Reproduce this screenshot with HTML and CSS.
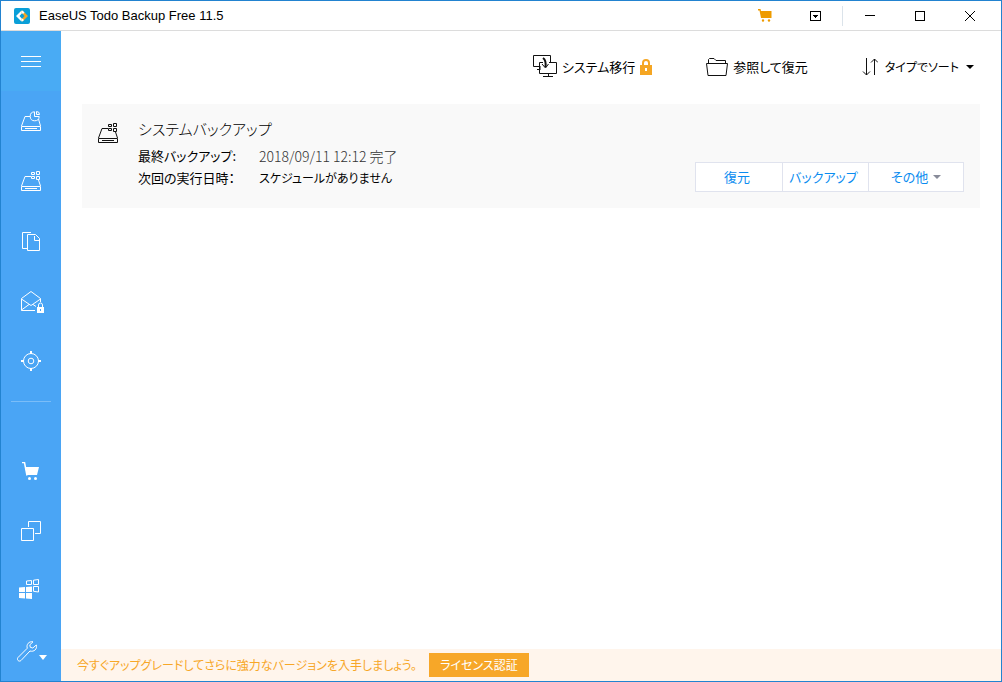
FILE: index.html
```html
<!DOCTYPE html>
<html lang="ja">
<head>
  <meta charset="UTF-8">
  <meta name="viewport" content="width=device-width, initial-scale=1.0">
  <title>EaseUS Todo Backup Free 11.5</title>
  <link rel="stylesheet" href="styles.css">
</head>
<body>
  <div class="window">
    <header class="titlebar">
      <svg class="logo" width="16" height="16" viewBox="0 0 16 16">
        <rect width="16" height="16" rx="2" fill="#0a9fd8"/>
        <path d="M7.500 2.500L2 8l5.500 5.500L9 12 5.500 8 9 4z" fill="#fff"/>
        <path d="M8.500 2.500L14 8l-5.500 5.500L7 12l3.500-4L7 4z" fill="#f5a623"/>
        <path d="M8.500 2.500L7 4l2 2 1.500-1.500zM7 12l1.500 1.500L10 12 8.500 10.500z" fill="#fff"/>
      </svg>
      <h1>EaseUS Todo Backup Free 11.5</h1>
      <div class="title-buttons">
        <button type="button" aria-label="購入">
          <svg width="14" height="14" viewBox="0 0 14 14" fill="#ee9b00">
            <path d="M0 0h2.500l.5 2H13.500v7H3L1.500 1.500H0z"/>
            <circle cx="5" cy="11.500" r="1.200"/><circle cx="11" cy="11.500" r="1.200"/>
          </svg>
        </button>
        <button type="button" aria-label="メニュー">
          <svg width="11" height="10" viewBox="0 0 11 10" shape-rendering="crispEdges">
            <rect x=".5" y=".5" width="10" height="9" fill="none" stroke="#000"/>
            <path d="M3 4h5v1H7v1H6v1H5V6H4V5H3z"/>
          </svg>
        </button>
        <span class="separator"></span>
        <button type="button" aria-label="最小化">
          <svg width="10" height="11" viewBox="0 0 10 11"><path d="M0 5h10v1H0z"/></svg>
        </button>
        <button type="button" aria-label="最大化">
          <svg width="10" height="10" viewBox="0 0 10 10"><rect x=".5" y=".5" width="9" height="9" fill="none" stroke="#000"/></svg>
        </button>
        <button type="button" aria-label="閉じる">
          <svg width="10" height="10" viewBox="0 0 10 10"><path d="M0 0l10 10M10 0L0 10" stroke="#000"/></svg>
        </button>
      </div>
    </header>

    <div class="body">
      <nav class="sidebar">
        <button type="button" class="menu" aria-label="メニューを開く">
          <svg width="20" height="11" viewBox="0 0 20 11"><path d="M0 .5h20M0 5.500h20M0 10.500h20"/></svg>
        </button>
        <button type="button" aria-label="ディスクバックアップ">
          <svg width="20" height="20" viewBox="0 0 20 20">
            <path d="M9 5.500H4L.5 15M17.500 8L19.500 15M.5 15.500h19v4H.5zM4 17.500h12"/>
            <path d="M13.500.8a4.500 4.500 0 1 0 4.700 4.700h-4.700zM15.500.5v3H18.500A3 3 0 0 0 15.500.5z"/>
          </svg>
        </button>
        <button type="button" aria-label="システムバックアップ">
          <svg width="20" height="20" viewBox="0 0 20 20">
            <path d="M10 5.500H4L.5 15M17.500 9l2 6M.5 15.500h19v4H.5zM4 17.500h12"/>
            <path d="M10.500 1.500h3v2h-3zM15.500.5h3v3h-3zM10.500 5.500h3v2h-3zM15.500 5.500h3v3h-3z"/>
          </svg>
        </button>
        <button type="button" aria-label="ファイルバックアップ">
          <svg width="18" height="19" viewBox="0 0 18 19">
            <path d="M5 16.500H.5V.5H9M5.500 2.500h8l4 4v12h-12zM12.500 4v4.500h5"/>
          </svg>
        </button>
        <button type="button" aria-label="メールバックアップ">
          <svg class="mail" width="23" height="22" viewBox="0 0 23 22">
            <path d="M14 19.500H.5V7.500L10 .5l9.500 7V11M.5 8L10 14.500 19.500 8M.5 19L8 13.500M12 13.500l3 2"/>
            <path d="M17.500 16v-2a2 2 0 0 1 4 0v2"/>
            <path class="solid" d="M16 16h7v6h-7z"/><path d="M19.500 18v2" stroke="#4aa5f5"/>
          </svg>
        </button>
        <button type="button" aria-label="スマートバックアップ">
          <svg width="20" height="20" viewBox="0 0 20 20">
            <circle cx="10" cy="10" r="7.500"/><circle cx="10" cy="10" r="2.800"/>
            <path d="M10 0v3M10 17v3M0 10h3M17 10h3" stroke-width="2"/>
          </svg>
        </button>
        <hr>
        <div class="sidebar-bottom">
          <button type="button" aria-label="購入">
            <svg width="18" height="18" viewBox="0 0 18 18">
              <path d="M0 .5h2.500L5 13.500" stroke-width="1.500"/>
              <path class="solid" d="M3 5h14l-2 8H5z"/>
              <circle class="solid" cx="7.500" cy="16.500" r="1.500"/><circle class="solid" cx="13.500" cy="16.500" r="1.500"/>
            </svg>
          </button>
          <button type="button" aria-label="クローン">
            <svg width="20" height="20" viewBox="0 0 20 20"><path d="M7.500 6V.5h12v12H14M.5 7.500h12v12H.5z"/></svg>
          </button>
          <button type="button" class="shift" aria-label="システムクローン">
            <svg width="20" height="20" viewBox="0 0 20 20">
              <path d="M7.500 2l5-.5v4h-5zM14.500 1.200l5-.7v5h-5zM14.500 7.500h5V13l-5-.7z"/>
              <path class="solid" d="M0 8.500L6 8v5H0zM7 8l6-.5V13H7zM0 14h6v5.500L0 19zM7 14h6v6l-6-.5z"/>
            </svg>
          </button>
          <button type="button" class="tools" aria-label="ツール">
            <svg width="30" height="21" viewBox="0 0 30 21">
              <path d="M16 .8C12 0 9 3.500 10.300 7.200L1 16.500c-1.800 2.200 1 4.800 3 3l9-9.500c4 1.200 7.500-2 6.300-6l-3.500 3-2.500-.7-.5-2.500z"/>
              <path class="solid" d="M22 14h8l-4 5z"/>
            </svg>
          </button>
        </div>
      </nav>

      <main>
        <div class="toolbar">
          <button type="button" class="migrate">
            <svg width="24" height="23" viewBox="0 0 24 23">
              <path d="M6 11.500H.5V.5h17V7M4 14.500h3M7 11v4M10 7.500H6.500v11h17v-11H16M15.500 19v2.500M10 21.500h10"/>
              <path d="M10 3c3 2 3 5 2.500 9" stroke-width="2"/><path d="M9 9l3.500 4L15.500 9"/>
            </svg>
            <span>システム移行</span>
            <svg width="12" height="16" viewBox="0 0 12 16">
              <path d="M3 7V4a3 3 0 0 1 6 0v3" stroke="#f5a623" stroke-width="2"/>
              <path d="M0 6h12v10H0z" fill="#f5a623" stroke="none"/><path d="M5 9h2v3H5z" fill="#fff" stroke="none"/>
            </svg>
          </button>
          <button type="button" class="browse">
            <svg width="22" height="18" viewBox="0 0 22 18">
              <path d="M2.500 5V1.500l1-1H8L10 2.500h9.500V5M.5 5.500h21L20 17.500H2z"/>
            </svg>
            <span>参照して復元</span>
          </button>
          <button type="button" class="sort">
            <svg width="16" height="18" viewBox="0 0 16 18">
              <path d="M4.500 0v17M1 13.500L4.500 17 8 13.500M12.500 17V1M9 4.500L12.500 1 16 4.500"/>
            </svg>
            <span>タイプでソート</span>
            <i class="caret"></i>
          </button>
        </div>

        <section class="card">
          <svg class="drive" width="20" height="20" viewBox="0 0 20 20">
            <path d="M10 5.500H4L.5 15M17.500 9l2 6M.5 15.500h19v4H.5zM4 17.500h12"/>
            <path d="M10.500 1.500h3v2h-3zM15.500.5h3v3h-3zM10.500 5.500h3v2h-3zM15.500 5.500h3v3h-3z"/>
          </svg>
          <div class="info">
            <h2>システムバックアップ</h2>
            <dl>
              <dt>最終バックアップ:</dt>
              <dd class="date">2018/09/11 12:12 完了</dd>
              <dt>次回の実行日時：</dt>
              <dd>スケジュールがありません</dd>
            </dl>
          </div>
          <div class="actions">
            <button type="button">復元</button>
            <button type="button">バックアップ</button>
            <button type="button" class="more">その他 <i class="caret"></i></button>
          </div>
        </section>

        <footer class="upgrade">
          <p>今すぐアップグレードしてさらに強力なバージョンを入手しましょう。</p>
          <button type="button">ライセンス認証</button>
        </footer>
      </main>
    </div>
  </div>
</body>
</html>
```
FILE: styles.css
```css
* {
  margin: 0;
  padding: 0;
  box-sizing: border-box;
}

body {
  font-family: "Noto Sans CJK JP", sans-serif;
  font-size: 13px;
  line-height: 22px;
  font-feature-settings: "palt";
  color: #000;
  background: #fff;
}

button {
  display: flex;
  align-items: center;
  justify-content: center;
  border: none;
  background: none;
  color: inherit;
  font: inherit;
  font-feature-settings: inherit;
  white-space: nowrap;
  cursor: pointer;
}

svg {
  flex: none;
}

.window {
  display: flex;
  flex-direction: column;
  min-height: 100vh;
  border: 1px solid #2283d0;
}

/* ===== Title bar ===== */
.titlebar {
  display: flex;
  align-items: center;
  height: 30px;
  padding-left: 13px;
  border-bottom: 1px solid #dcdcdc;
}

.titlebar h1 {
  margin-left: 9px;
  font: 13px "Liberation Sans", Arial, sans-serif;
}

.title-buttons {
  display: flex;
  align-items: center;
  margin-left: auto;
  padding-right: 6px;
}

.title-buttons button {
  width: 50px;
  height: 28px;
}

.separator {
  width: 1px;
  height: 20px;
  margin: 0 2px;
  background: #dbe3ea;
}

/* ===== Sidebar ===== */
.body {
  display: flex;
  flex: 1;
}

.sidebar {
  display: flex;
  flex-direction: column;
  width: 60px;
  background: #4aa5f5;
}

.sidebar button {
  width: 60px;
  height: 60px;
}

.sidebar .menu {
  background: #49abf4;
}

.sidebar svg {
  fill: none;
  stroke: #fff;
}

.sidebar .solid {
  fill: #fff;
  stroke: none;
}

.sidebar .mail {
  margin: 2px 0 0 3px;
}

.sidebar .shift {
  padding: 0 4px 4px 0;
}

.sidebar .tools {
  padding-left: 2px;
}

.sidebar hr {
  width: 40px;
  margin: 10px auto 0;
  border: none;
  border-top: 1px solid #7abdf8;
}

.sidebar-bottom {
  margin-top: auto;
}

/* ===== Main ===== */
main {
  display: flex;
  flex-direction: column;
  flex: 1;
}

.toolbar {
  display: flex;
  justify-content: flex-end;
  gap: 54px;
  height: 73px;
  padding: 0 27px 2px 0;
}

.toolbar button {
  gap: 5px;
}

.toolbar .sort {
  gap: 7px;
  font-size: 12px;
}

.toolbar svg,
.drive {
  fill: none;
  stroke: #111;
}

.caret {
  border: 4px solid transparent;
  border-top-color: #000;
  border-bottom: none;
}

.card {
  display: flex;
  margin: 0 21px;
  padding: 14px 16px 16px;
  background: #f9f9f9;
}

.drive {
  margin-top: 5px;
}

.info {
  margin-left: 20px;
  padding-bottom: 3px;
}

.info h2 {
  margin-bottom: 5px;
  font-size: 15px;
  font-weight: 300;
}

.info dl {
  display: grid;
  grid-template-columns: 121px auto;
}

.info dd {
  font-size: 12px;
}

.info .date {
  font-size: 14px;
  font-weight: 300;
  color: #333;
}

.actions {
  display: flex;
  align-self: flex-end;
  margin-left: auto;
  border: 1px solid #e0e3ee;
  background: #fff;
  color: #0a8cf0;
}

.actions button {
  width: 86px;
  height: 28px;
  padding-right: 4px;
}

.actions button + button {
  border-left: 1px solid #e0e3ee;
}

.actions .more {
  width: 95px;
  padding: 0;
  gap: 5px;
}

.more .caret {
  border-top-color: #888b99;
}

/* ===== Upgrade bar ===== */
.upgrade {
  display: flex;
  align-items: center;
  gap: 12px;
  height: 32px;
  margin-top: auto;
  padding-left: 16px;
  background: #fff5ec;
  color: #f7a728;
  font-size: 12px;
}

.upgrade button {
  width: 100px;
  height: 24px;
  background: #f7a728;
  color: #fff;
}
```
